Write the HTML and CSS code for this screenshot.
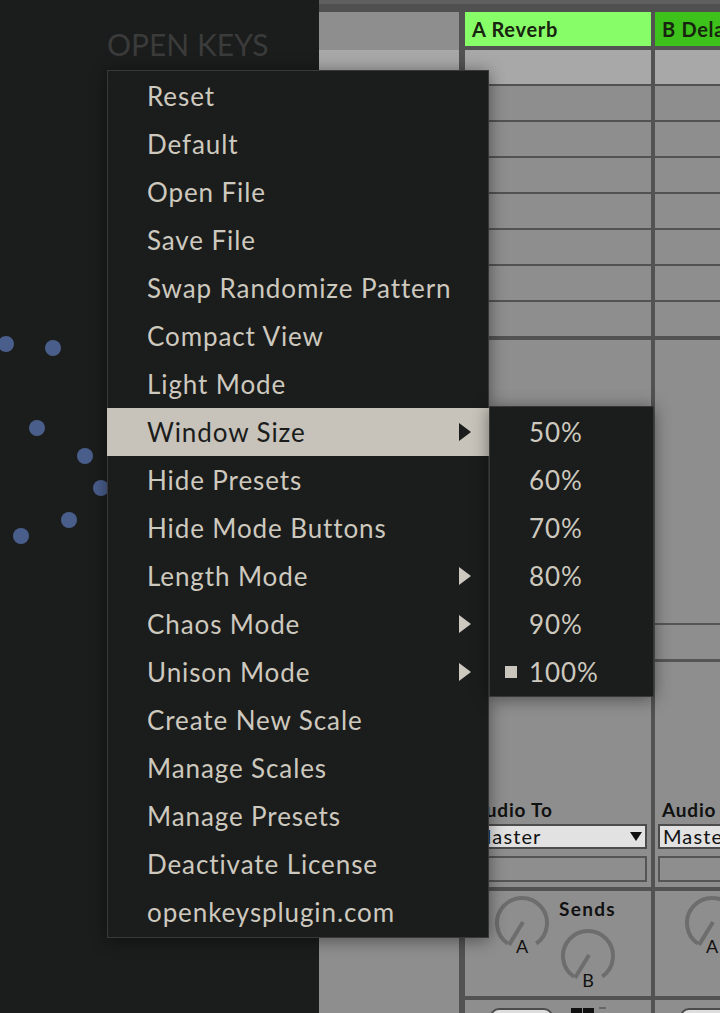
FILE: index.html
```html
<!DOCTYPE html>
<html lang="en">
<head>
    <link rel="stylesheet" href="styles.css">
    <meta charset="UTF-8">
    <meta name="viewport" content="width=device-width, initial-scale=1.0">
    <title>Open Keys</title>
</head>
<body>
    <div class="screen">
        <div class="plugin">
            <div class="brand">OPEN KEYS</div>
            <svg class="dots" width="319" height="600" viewBox="0 0 319 600">
                <circle cx="6" cy="344" r="8"/>
                <circle cx="53" cy="348" r="8"/>
                <circle cx="37" cy="428" r="8"/>
                <circle cx="85" cy="456" r="8"/>
                <circle cx="101" cy="488" r="8"/>
                <circle cx="69" cy="520" r="8"/>
                <circle cx="21" cy="536" r="8"/>
            </svg>
        </div>

        <div class="live">
            <div class="topbar"></div>
            <div class="tracks">
                <div class="track master">
                    <div class="master-slot"></div>
                </div>
                <div class="vsep wide"></div>

                <div class="track ret">
                    <div class="ret-head reverb">A Reverb</div>
                    <div class="slots">
                        <div class="slot first"></div>
                        <div class="slot"></div>
                        <div class="slot"></div>
                        <div class="slot"></div>
                        <div class="slot"></div>
                        <div class="slot"></div>
                        <div class="slot"></div>
                        <div class="slot"></div>
                    </div>
                    <div class="mixer">
                        <div class="io-label">Audio To</div>
                        <div class="dropdown"><span>Master</span><span class="caret"></span></div>
                        <div class="io-box"></div>
                    </div>
                    <div class="sends">
                        <svg class="knob" width="56" height="64" viewBox="0 0 56 64">
                            <path d="M13.7 48.5 A25 25 0 1 1 42.3 48.5"/>
                            <line x1="29" y1="27" x2="15" y2="50"/>
                            <text x="28" y="58">A</text>
                        </svg>
                        <div class="send-b">
                            <div class="sends-label">Sends</div>
                            <svg class="knob" width="56" height="64" viewBox="0 0 56 64">
                                <path d="M13.7 48.5 A25 25 0 1 1 42.3 48.5"/>
                                <line x1="29" y1="27" x2="15" y2="50"/>
                                <text x="28" y="59">B</text>
                            </svg>
                        </div>
                    </div>
                    <div class="bottom">
                        <div class="pill"></div>
                        <div class="meter"><span></span><span></span></div>
                        <div class="dash"></div>
                    </div>
                </div>
                <div class="vsep"></div>

                <div class="track ret">
                    <div class="ret-head delay">B Delay</div>
                    <div class="slots">
                        <div class="slot first"></div>
                        <div class="slot"></div>
                        <div class="slot"></div>
                        <div class="slot"></div>
                        <div class="slot"></div>
                        <div class="slot"></div>
                        <div class="slot"></div>
                        <div class="slot"></div>
                    </div>
                    <div class="mixer">
                        <div class="rule one"></div>
                        <div class="rule two"></div>
                        <div class="io-label">Audio To</div>
                        <div class="dropdown"><span>Master</span><span class="caret"></span></div>
                        <div class="io-box"></div>
                    </div>
                    <div class="sends">
                        <svg class="knob" width="56" height="64" viewBox="0 0 56 64">
                            <path d="M13.7 48.5 A25 25 0 1 1 42.3 48.5"/>
                            <line x1="29" y1="27" x2="15" y2="50"/>
                            <text x="28" y="58">A</text>
                        </svg>
                    </div>
                    <div class="bottom">
                        <div class="pill"></div>
                    </div>
                </div>
            </div>
        </div>
    </div>

    <div class="menu main">
        <div class="item">Reset</div>
        <div class="item">Default</div>
        <div class="item">Open File</div>
        <div class="item">Save File</div>
        <div class="item">Swap Randomize Pattern</div>
        <div class="item">Compact View</div>
        <div class="item">Light Mode</div>
        <div class="item active">Window Size<span class="arrow"></span></div>
        <div class="item">Hide Presets</div>
        <div class="item">Hide Mode Buttons</div>
        <div class="item">Length Mode<span class="arrow"></span></div>
        <div class="item">Chaos Mode<span class="arrow"></span></div>
        <div class="item">Unison Mode<span class="arrow"></span></div>
        <div class="item">Create New Scale</div>
        <div class="item">Manage Scales</div>
        <div class="item">Manage Presets</div>
        <div class="item">Deactivate License</div>
        <div class="item">openkeysplugin.com</div>
    </div>

    <div class="menu sub">
        <div class="item"><span class="check"></span>50%</div>
        <div class="item"><span class="check"></span>60%</div>
        <div class="item"><span class="check"></span>70%</div>
        <div class="item"><span class="check"></span>80%</div>
        <div class="item"><span class="check"></span>90%</div>
        <div class="item"><span class="check on"></span>100%</div>
    </div>
</body>
</html>
```

FILE: styles.css
```css
* {
    box-sizing: border-box;
}

body {
    margin: 0;
    width: 720px;
    height: 1013px;
    overflow: hidden;
    background-color: #1b1c1c;
    font-family: Lato, "Liberation Sans", sans-serif;
}

.screen {
    display: flex;
    height: 1013px;
}

/* plugin window */
.plugin {
    position: relative;
    width: 319px;
    flex-shrink: 0;
    background-color: #1b1c1c;
}

.brand {
    padding: 26px 0 0 107px;
    font-size: 30px;
    color: #3a3b3a;
}

.dots {
    position: absolute;
    left: 0;
    top: 0;
}

.dots circle {
    fill: #4a5e8b;
}

/* live session */
.live {
    flex: 1;
    overflow: hidden;
    background-color: #8e8e8e;
}

.topbar {
    height: 12px;
    background-color: #505050;
    border-top: 4px solid #5f5f5f;
}

.tracks {
    display: flex;
    height: 1001px;
}

.vsep {
    width: 4px;
    flex-shrink: 0;
    background-color: #525252;
}

.vsep.wide {
    width: 6px;
}

.track {
    flex-shrink: 0;
    display: flex;
    flex-direction: column;
    background-color: #525252;
}

.track > * {
    flex-shrink: 0;
}

.track.master {
    width: 140px;
    background-color: #8e8e8e;
}

.master-slot {
    margin-top: 38px;
    height: 34px;
    background-color: #a8a8a8;
}

.track.ret {
    width: 186px;
}

.ret-head {
    height: 34px;
    margin-bottom: 4px;
    padding-left: 7px;
    font-size: 20px;
    font-weight: bold;
    letter-spacing: 0.7px;
    line-height: 34px;
    white-space: nowrap;
    color: #18240f;
}

.ret-head.reverb {
    background-color: #87fd67;
}

.ret-head.delay {
    background-color: #3dc21c;
}

.slots {
    display: grid;
    grid-template-rows: repeat(8, 34px);
    gap: 2px;
    margin-bottom: 4px;
}

.slot {
    background-color: #8e8e8e;
}

.slot.first {
    background-color: #a8a8a8;
}

.mixer {
    height: 547px;
    margin-bottom: 4px;
    padding-bottom: 5px;
    display: flex;
    flex-direction: column;
    background-color: #8e8e8e;
}

.rule {
    background-color: #555555;
}

.rule.one {
    margin-top: 283px;
    height: 2px;
}

.rule.two {
    margin-top: 34px;
    height: 3px;
}

.io-label {
    margin: auto 0 4px 7px;
    font-size: 19px;
    font-weight: bold;
    letter-spacing: 0.8px;
    line-height: 20px;
    white-space: nowrap;
    color: #111;
}

.dropdown {
    display: flex;
    align-items: center;
    height: 25px;
    margin: 0 4px 0 3px;
    padding: 0 3px 0 3px;
    border: 2px solid #4c4c4c;
    background-color: #e2e2e2;
    font-size: 20px;
    letter-spacing: 1.1px;
    line-height: 21px;
    white-space: nowrap;
    color: #111;
}

.caret {
    margin-left: auto;
    border-top: 9px solid #111;
    border-left: 6px solid transparent;
    border-right: 6px solid transparent;
}

.io-box {
    height: 26px;
    margin: 7px 4px 0 3px;
    border: 2px solid #555555;
}

.sends {
    height: 105px;
    margin-bottom: 4px;
    padding: 4px 0 0 29px;
    display: flex;
    align-items: flex-start;
    gap: 9px;
    background-color: #8e8e8e;
}

.send-b {
    margin-top: 4px;
}

.sends-label {
    font-size: 19px;
    font-weight: bold;
    letter-spacing: 1.3px;
    line-height: 20px;
    color: #111;
}

.send-b .knob {
    margin: 9px 0 0 1px;
}

.knob path,
.knob line {
    fill: none;
    stroke: #6d6d6d;
    stroke-width: 4;
}

.knob text {
    font-family: Lato, "Liberation Sans", sans-serif;
    font-size: 18px;
    fill: #111;
    text-anchor: middle;
}

.bottom {
    flex: 1 1 0;
    min-height: 0;
    overflow: hidden;
    display: flex;
    align-items: flex-start;
    padding: 8px 0 0 25px;
    background-color: #8e8e8e;
}

.pill {
    width: 63px;
    height: 20px;
    border: 2px solid #4b4b4b;
    border-radius: 9px 9px 0 0;
    background-color: #dedede;
}

.meter {
    display: flex;
    gap: 1px;
    margin-left: 18px;
}

.meter span {
    width: 11px;
    height: 20px;
    background-color: #111;
}

.dash {
    width: 7px;
    height: 2px;
    margin: -1px 0 0 5px;
    background-color: #666;
}

/* context menu */
.menu {
    position: absolute;
    padding: 1px 0;
    background-color: #1b1c1c;
    border: 1px solid #373837;
    box-shadow: 0 2px 16px rgba(0, 0, 0, 0.45);
    font-size: 26px;
    letter-spacing: 0.9px;
    color: #cdc9bf;
}

.menu.main {
    left: 107px;
    top: 70px;
    width: 382px;
}

.menu.sub {
    left: 489px;
    top: 406px;
    width: 165px;
    padding-bottom: 0;
}

.item {
    display: flex;
    align-items: center;
    height: 48px;
    padding: 0 17px 0 39px;
    white-space: nowrap;
}

.item.active {
    margin: 0 -1px;
    padding: 0 18px 0 40px;
    background-color: #c7c3ba;
    color: #1b1c1c;
}

.arrow {
    margin-left: auto;
    border-left: 12px solid #cdc9bf;
    border-top: 9px solid transparent;
    border-bottom: 9px solid transparent;
}

.item.active .arrow {
    border-left-color: #1b1c1c;
}

.sub .item {
    padding-left: 15px;
}

.check {
    width: 12px;
    height: 12px;
    margin-right: 12px;
}

.check.on {
    background-color: #c9c5bc;
}
```
